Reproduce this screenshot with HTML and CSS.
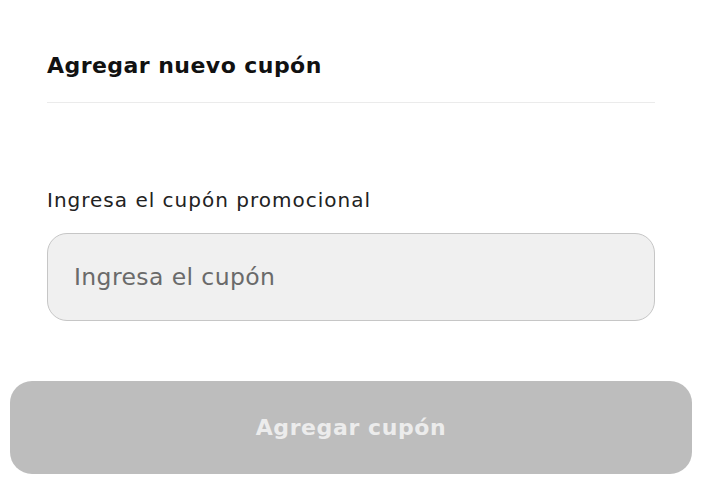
FILE: index.html
```html
<!DOCTYPE html>
<html lang="es">
<head>
<meta charset="utf-8">
<link rel="stylesheet" href="styles.css">
</head>
<body>
<div class="page">
  <section class="content">
    <h2 class="title">Agregar nuevo cupón</h2>
    <div class="divider"></div>
    <label class="label" for="coupon">Ingresa el cupón promocional</label>
    <input class="input" id="coupon" type="text" placeholder="Ingresa el cupón">
  </section>
  <button class="btn" disabled>Agregar cupón</button>
</div>
</body>
</html>
```

FILE: styles.css
```css
html, body {
  margin: 0;
  padding: 0;
  background: #fff;
}
body {
  font-family: "DejaVu Sans", "Noto Sans", sans-serif;
  width: 702px;
  height: 493px;
  overflow: hidden;
}
.page {
  padding: 0 10px;
  display: flex;
  flex-direction: column;
}
.content {
  padding: 0 37px;
  display: flex;
  flex-direction: column;
}
.title {
  margin: 51px 0 0;
  font-size: 22px;
  font-weight: 700;
  letter-spacing: 0.45px;
  color: #111;
  line-height: 30px;
}
.divider {
  margin-top: 21px;
  height: 1px;
  background: #ebebeb;
}
.label {
  margin-top: 84px;
  font-size: 20px;
  line-height: 26px;
  letter-spacing: 1px;
  color: #222;
  font-weight: 400;
}
.input {
  margin-top: 20px;
  box-sizing: border-box;
  height: 88px;
  width: 100%;
  border: 1.5px solid #c6c6c6;
  border-radius: 20px;
  background: #f0f0f0;
  padding: 0 26px;
  font-family: inherit;
  font-size: 23.5px;
  letter-spacing: 0.4px;
  color: #222;
  outline: none;
}
.input::placeholder {
  color: #6a6a6a;
}
.btn {
  margin-top: 60px;
  height: 93px;
  width: 100%;
  border: none;
  border-radius: 22px;
  background: #bdbdbd;
  color: #ececec;
  font-family: inherit;
  font-size: 22px;
  letter-spacing: 0.6px;
  font-weight: 700;
  padding: 0;
}
```
